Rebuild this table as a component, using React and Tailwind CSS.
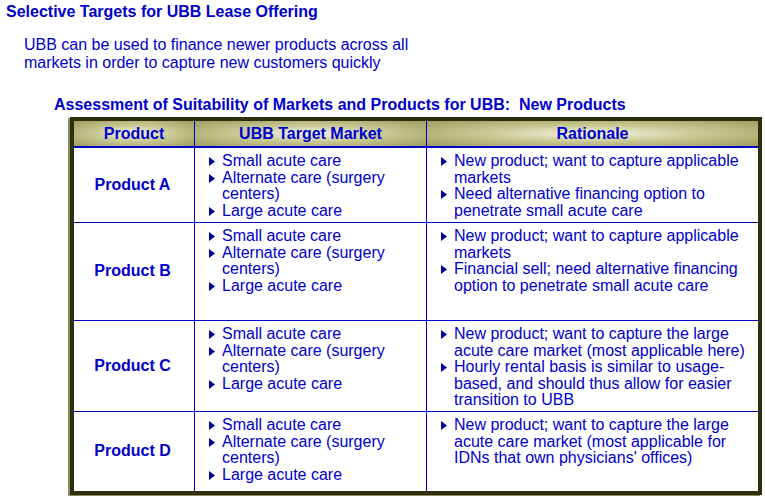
const rows = [
  {
    name: "Product A",
    h: "h-[75px]",
    market: [["Small acute care"], ["Alternate care (surgery", "centers)"], ["Large acute care"]],
    rationale: [
      ["New product; want to capture applicable", "markets"],
      ["Need alternative financing option to", "penetrate small acute care"],
    ],
  },
  {
    name: "Product B",
    h: "h-[98px]",
    market: [["Small acute care"], ["Alternate care (surgery", "centers)"], ["Large acute care"]],
    rationale: [
      ["New product; want to capture applicable", "markets"],
      ["Financial sell; need alternative financing", "option to penetrate small acute care"],
    ],
  },
  {
    name: "Product C",
    h: "h-[91px]",
    market: [["Small acute care"], ["Alternate care (surgery", "centers)"], ["Large acute care"]],
    rationale: [
      ["New product; want to capture the large", "acute care market (most applicable here)"],
      ["Hourly rental basis is similar to usage-", "based, and should thus allow for easier", "transition to UBB"],
    ],
  },
  {
    name: "Product D",
    h: "h-[79px]",
    market: [["Small acute care"], ["Alternate care (surgery", "centers)"], ["Large acute care"]],
    rationale: [
      ["New product; want to capture the large", "acute care market (most applicable for", "IDNs that own physicians' offices)"],
    ],
  },
];

function Bullet() {
  return (
    <svg className="mt-[4px] h-[9px] w-[6px] shrink-0" viewBox="0 0 6 9" aria-hidden="true">
      <path d="M0 0 L6 4.5 L0 9 Z" fill="#000099" />
    </svg>
  );
}

function BulletList({ items }) {
  return (
    <div className="flex flex-col">
      {items.map((lines, i) => (
        <div key={i} className="flex gap-[7px]">
          <Bullet />
          <div className="whitespace-nowrap">
            {lines.map((l, j) => (
              <div key={j}>{l}</div>
            ))}
          </div>
        </div>
      ))}
    </div>
  );
}

const headCell =
  "flex h-[25px] items-center justify-center font-bold bg-[radial-gradient(ellipse_at_center,#f4f4e4_0%,#c9c995_45%,#9d9d5e_100%)]";

export default function App() {
  return (
    <div className="h-[501px] w-[765px] overflow-hidden bg-white font-['Liberation_Sans',Arial,sans-serif] text-[16px] text-[#0000cc]">
      <div className="pl-[6px] pt-[3px] font-bold leading-[18px]">Selective Targets for UBB Lease Offering</div>

      <div className="mt-[15px] pl-[24px] leading-[18px]">
        <div>UBB can be used to finance newer products across all</div>
        <div>markets in order to capture new customers quickly</div>
      </div>

      <div className="mt-[24px] pl-[54px] font-bold leading-[18px]">
        Assessment of Suitability of Markets and Products for UBB:&nbsp; New Products
      </div>

      <div className="ml-[70px] mt-[3px] w-[692px] border-4 border-[#2e2e0e] shadow-[-2px_1px_0_#8c8c60]">
        <div className="grid grid-cols-[121px_232px_1fr] border-b-2 border-[#0000cc]">
          <div className={`${headCell} border-r border-[#0000cc]`}>Product</div>
          <div className={`${headCell} border-r border-[#0000cc]`}>UBB Target Market</div>
          <div className={headCell}>Rationale</div>
        </div>

        {rows.map((r, i) => (
          <div
            key={r.name}
            className={`grid grid-cols-[121px_232px_1fr] leading-[16.5px] ${r.h} ${
              i < rows.length - 1 ? "border-b border-[#0000cc]" : ""
            }`}
          >
            <div className="flex items-center justify-center border-r border-[#0000cc] pr-[3px] font-bold">
              {r.name}
            </div>
            <div className="border-r border-[#0000cc] pl-[14px] pt-[5px]">
              <BulletList items={r.market} />
            </div>
            <div className="pl-[14px] pt-[5px]">
              <BulletList items={r.rationale} />
            </div>
          </div>
        ))}
      </div>
    </div>
  );
}
